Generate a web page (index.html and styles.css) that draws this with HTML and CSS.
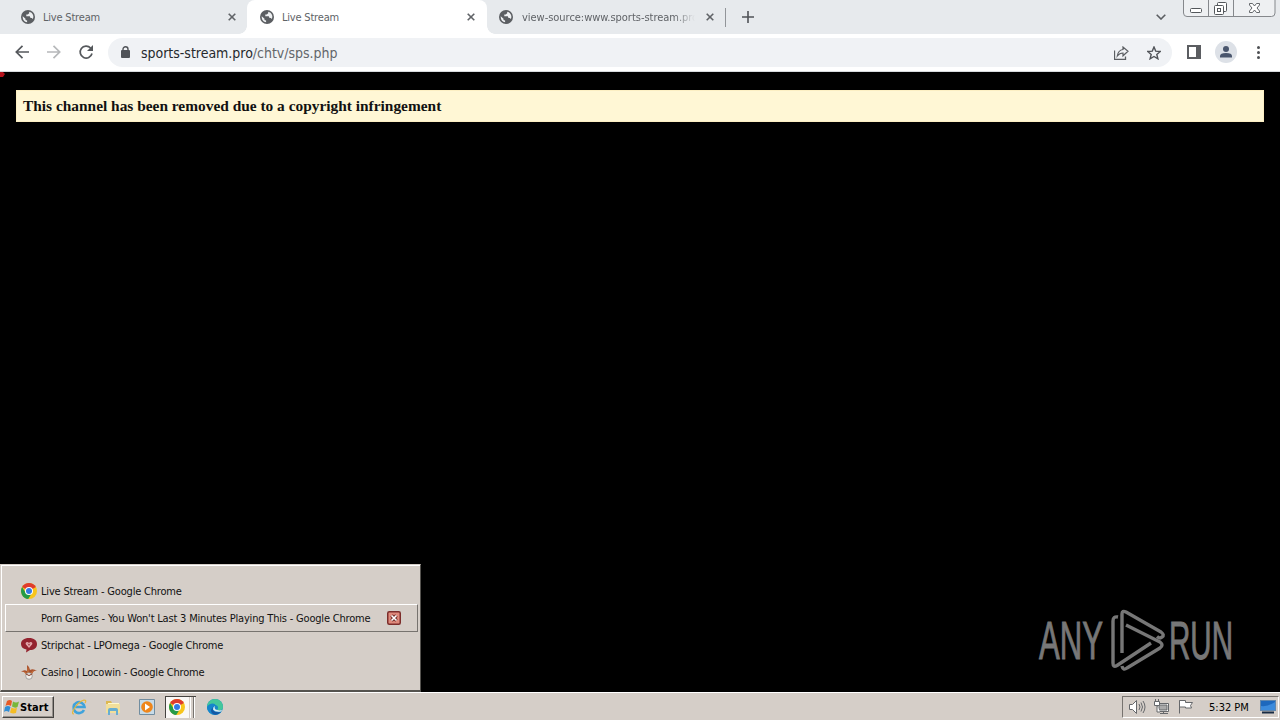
FILE: index.html
```html
<!DOCTYPE html>
<html lang="en">
<head>
<meta charset="utf-8">
<title>Live Stream</title>
<link rel="stylesheet" href="styles.css">
</head>
<body>
<svg class="defs" aria-hidden="true">
  <symbol id="globe" viewBox="0 0 14 14"><circle cx="7" cy="7" r="7" fill="#5b5e62"/><path d="M1.700 6.200 4.500 8.700v1.200l1.600.5v1.800C3.600 12 1.500 9.800 1.700 6.200zM8.200 1.700v1.500L6.700 4.500H5.300v1.700h3.500l.7 1.700h1.300l1 1.200c1.500-3 .1-6.500-3.600-7.400z" fill="#eef0f2"/></symbol>
  <symbol id="cross" viewBox="0 0 8 8"><path d="M.7.7l6.600 6.600M7.300.7.7 7.300" stroke="#606367" stroke-width="1.600"/></symbol>
  <symbol id="chrome" viewBox="0 0 16 16"><circle cx="8" cy="8" r="8" fill="#f8c51c"/><path d="M8 8 1.100 4A8 8 0 0 1 14.900 4z" fill="#df3b2e"/><path d="M1.100 4A8 8 0 0 0 7.200 16l3.900-6.200L8 8 4.700 9.700z" fill="#259b48"/><circle cx="8" cy="8" r="4" fill="#fff"/><circle cx="8" cy="8" r="3" fill="#3479e4"/></symbol>
</svg>
<div class="screen">
  <header class="tabs">
    <div class="tab first"><svg class="fav"><use href="#globe"/></svg><span class="title">Live Stream</span><svg class="x"><use href="#cross"/></svg></div>
    <div class="tab active"><svg class="fav"><use href="#globe"/></svg><span class="title">Live Stream</span><svg class="x"><use href="#cross"/></svg></div>
    <div class="tab last"><svg class="fav"><use href="#globe"/></svg><span class="title fade">view-source:www.sports-stream.pro</span><svg class="x"><use href="#cross"/></svg></div>
    <svg class="plus" viewBox="0 0 12 12"><path d="M6 0v12M0 6h12" stroke="#505357" stroke-width="1.600"/></svg>
    <svg class="chev" viewBox="0 0 10 6"><path d="M.7.7 5 5 9.300.7" fill="none" stroke="#5b5e62" stroke-width="1.600"/></svg>
    <svg class="winbtns" viewBox="0 0 93 18"><path d="M.5 0v13q0 3.500 3.500 3.500h84.500q3.500 0 3.500-3.500V0M25.500 0v16M50.500 0v16" fill="#eef0f2" stroke="#85888c"/><g fill="#fff" stroke="#53575b"><rect x="7.500" y="8.500" width="11" height="4" rx="1"/><rect x="34.500" y="2.500" width="9" height="9" rx="1"/><rect x="31.500" y="5.500" width="9" height="9" rx="1"/><rect x="34.500" y="8.500" width="3" height="3"/><path d="M66.500 3.500h3l2 2.500 2-2.500h3v1.500L74 8l2.500 3v1.500h-3l-2-2.500-2 2.500h-3V11L69 8l-2.500-3z" stroke-width=".9"/></g></svg>
  </header>
  <nav class="toolbar">
    <svg class="navicons" viewBox="0 0 80 16" fill="none" stroke="#55585c" stroke-width="1.700"><path d="M15 8H2.500M8.500 1.800 2.300 8l6.200 6.200"/><path d="M33 8h12.500M39.500 1.800 45.700 8l-6.200 6.200" stroke="#b6b8ba"/><path d="M76.600 4A6 6 0 1 0 78 9.500"/><path d="M79 1v6h-6z" fill="#55585c" stroke="none"/></svg>
    <div class="omni">
      <svg class="lock" viewBox="0 0 9 12"><rect y="4" width="9" height="8" rx="1" fill="#505358"/><path d="M2 5V3.200a2.500 2.500 0 0 1 5 0V5" fill="none" stroke="#505358" stroke-width="1.400"/></svg>
      <span class="url">sports-stream.pro<i>/chtv/sps.php</i></span>
      <svg class="share" viewBox="0 0 15 14" fill="none" stroke="#5b5e62"><path d="M.5 4.500v9h11v-3" stroke-width="1.300"/><path d="M9 1v2.500C5.500 4 3.800 6.500 3.300 10 5 7.800 6.500 7 9 7v2.800l5-4.500z" stroke-width="1.200"/></svg>
      <svg class="star" viewBox="0 0 14 14"><path d="m7 1 1.700 4.100 4.600.4-3.500 2.900 1.100 4.400L7 10.500l-3.900 2.300 1.100-4.400L.7 5.500l4.600-.4z" fill="none" stroke="#505358" stroke-width="1.400"/></svg>
    </div>
    <svg class="panel" viewBox="0 0 14 14"><path d="M0 0h14v14H0zM2 2v10h7V2z" fill="#5b5d61" fill-rule="evenodd"/></svg>
    <svg class="avatar" viewBox="0 0 22 22"><circle cx="11" cy="11" r="11" fill="#dde1e7"/><circle cx="11" cy="8" r="3" fill="#4a566d"/><path d="M5 16.500V15q0-3 6-3t6 3v1.500z" fill="#4a566d"/></svg>
    <svg class="dots" viewBox="0 0 3 13" fill="#4d4f53"><circle cx="1.500" cy="1.500" r="1.500"/><circle cx="1.500" cy="6.500" r="1.500"/><circle cx="1.500" cy="11.500" r="1.500"/></svg>
  </nav>
  <main class="page">
    <svg class="speck" viewBox="0 0 6 6"><path d="M0 0h3l2 2-2 3H0z" fill="#b5121c"/></svg>
    <div class="notice">This channel has been removed due to a copyright infringement</div>
    <svg class="brand" viewBox="0 0 220 76">
      <g class="brandtext"><text x="3" y="50" textLength="64" lengthAdjust="spacingAndGlyphs">ANY</text><text x="133" y="50" textLength="64" lengthAdjust="spacingAndGlyphs">RUN</text></g>
      <g fill="none" stroke="#777" stroke-width="3.400" stroke-linejoin="round"><path d="M86 44V5q0-4 4-2l35 20q4 3 1 5-2 2-5-.5"/><path d="M82 8q-5-1-5 4v42q0 5 4 2.500L115 34"/><path d="M90 16 124 33q4 3 0 6L91 59q-4 3-5-2"/></g>
    </svg>
    <div class="popup">
      <div class="row"><svg class="ico"><use href="#chrome"/></svg><span class="label">Live Stream - Google Chrome</span></div>
      <div class="row raised"><span class="ico"></span><span>Porn Games - You Won't Last 3 Minutes Playing This - Google Chrome</span><svg class="close" viewBox="0 0 14 14"><rect x=".75" y=".75" width="12.500" height="12.500" rx="1.500" fill="#e08a7c" stroke="#7c2d2b" stroke-width="1.500"/><path d="m4.500 4.500 5 5m0-5-5 5" stroke="#742d28" stroke-width="3.600"/><path d="m4.500 4.500 5 5m0-5-5 5" stroke="#fff" stroke-width="1.600"/></svg></div>
      <div class="row"><svg class="ico" viewBox="0 0 16 16"><path d="M8 1c5 0 8 2.500 8 6 0 4-3 6-7 6l-4 2.500.5-3C2 12 0 10 0 7c0-3.500 3-6 8-6z" fill="#94232f"/><path d="M8 11 4.800 7.200C4 5 6.500 4 8 6c1.500-2 4-1 3.200 1.200z" fill="#e3a9ad"/><path d="m6.500 6 1.500 1.500L9.500 6 8 9z" fill="#94232f"/></svg><span class="label">Stripchat - LPOmega - Google Chrome</span></div>
      <div class="row"><svg class="ico" viewBox="0 0 16 16"><path d="M5 11Q4 7 0 8q3-3 6-1L6 1q3 2 3 5 3-2 7 1-4-1-5 4z" fill="#a9532f"/><path d="M7 2l1 8 5-4-3 5H6L2 7l4 2z" fill="#c9753f"/><circle cx="8" cy="12" r="3.300" fill="#f1eeea" stroke="#888" stroke-width=".7"/><path d="m5 10 3 1.500 3-1.500" fill="none" stroke="#813c28"/></svg><span class="label">Casino | Locowin - Google Chrome</span></div>
    </div>
  </main>
  <footer class="taskbar">
    <div class="start"><svg viewBox="0 0 16 16"><path d="M3 2q3-2 5 0L7 7Q4 5 1.500 7z" fill="#e85a25"/><path d="M9 2.500q3 2 6 0L13.500 8Q11 9.500 8 7.500z" fill="#78b739"/><path d="M1 8q3-2 5.500 0L5 13q-3-2-5 0z" fill="#328ed5"/><path d="M7.500 8.500q3 2 5.500 0L12 14q-3 1-6-.5z" fill="#f5bd25"/></svg><b>Start</b></div>
    <svg class="ie" viewBox="0 0 16 16"><path d="M13 11A5.500 5.500 0 1 1 13.500 8H4" fill="none" stroke="#3fa3dc" stroke-width="2.600"/><path d="M3 15Q0 15 3 10 7 3 13 1q3 0 1 3" fill="none" stroke="#e6b73a" stroke-width="1.200"/></svg>
    <svg class="folder" viewBox="0 0 16 16"><path d="M1 2h5l1 2h7v10H1z" fill="#ddb851"/><path d="M3 4h11v8H3z" fill="#fff8cb"/><path d="M1 5h14v9H1z" fill="#f2df9a"/><path d="M3 16v-5q0-2 2-2h6q2 0 2 2v5h-2v-4H5v4z" fill="#68aed1"/></svg>
    <svg class="media" viewBox="0 0 16 16"><path d="M.5.500h15v15H.5z" fill="#c7dbe8" stroke="#718da0"/><circle cx="8" cy="8" r="5.800" fill="#ef861b"/><path d="m6 4.500 5 3.500-5 3.500z" fill="#fff"/></svg>
    <div class="stack"><svg><use href="#chrome"/></svg></div>
    <svg class="edge" viewBox="0 0 16 16"><circle cx="8" cy="8" r="8" fill="#168ac7"/><path d="M0 8A8 8 0 0 1 16 8c0 3-3 4-6 3 2-2 1-5-2-5Q4 3 0 8z" fill="#44c79b"/><path d="M0 8c2-4 8-5 9-1-4-1-4 5 5 6-6 6-14 1-14-5z" fill="#1686cc"/><path d="M6 8q-2 6 8 5-4 4-8 2-4-3 0-7z" fill="#1458a5"/><path d="M8 7q-2 4 5 4.500 3-.5 3-2l-2 3q-6 1-8-2 0-3 2-3.500z" fill="#e0eef2"/></svg>
    <div class="tray">
      <svg class="trayicons" viewBox="0 0 66 16" fill="#fff" stroke="#66686b"><path d="M.5 5.500h3l4-4v13l-4-4h-3z"/><path d="M10 5q2 3 0 6M12 3.500q3 4.500 0 9M14 2q4 6 0 12" fill="none"/><path d="M28.500 4.500h11v8h-11zM31 14.500h8M34.500 12.500v2"/><path d="M30 6h8v5h-8z" fill="#aaa"/><path d="M25.500 2.500h5v4h-5zM26.500 0v2.500M29.500 0v2.500M28 6.500v6.500h3"/><path d="M50.500 1.500v13M50.500 1.500h6v2h7l-2 3 1 2.500h-6V8h-6z"/></svg>
      <span class="time">5:32 PM</span>
      <svg class="desk" viewBox="0 0 16 14"><rect x=".5" y=".5" width="15" height="10" fill="#1d68bd" stroke="#6288ae"/><path d="M1 6Q8 7 15 2v8H1z" fill="#3c8bdc"/><path d="M2 12.500h12" stroke="#172b43" stroke-width="2"/></svg>
    </div>
  </footer>
</div>
</body>
</html>
```
FILE: styles.css
```css
* { box-sizing: border-box; }
body { margin: 0; font-family: "DejaVu Sans Condensed", "DejaVu Sans", sans-serif; font-size: 11px; }
svg { display: block; flex: none; }
.defs { display: none; }
.screen { width: 1280px; height: 720px; display: flex; flex-direction: column; overflow: hidden; background: #000; }
.tabs { height: 34px; flex: none; display: flex; background: #e7eaed; position: relative; }
.tab { height: 34px; display: flex; align-items: center; color: #606367; flex: none; }
.first { width: 247px; padding: 0 10px 0 21px; }
.active { width: 240px; padding: 0 11px 0 13px; background: #fff; border-radius: 8px 8px 0 0; position: relative; }
.active::before, .active::after { content: ""; position: absolute; bottom: 0; width: 8px; height: 8px; }
.active::before { left: -8px; background: radial-gradient(circle at 0 0, transparent 7.5px, #fff 8px); }
.active::after { right: -8px; background: radial-gradient(circle at 100% 0, transparent 7.5px, #fff 8px); }
.last { width: 239px; padding: 0 11px 0 12px; position: relative; }
.last::after { content: ""; position: absolute; right: 0; top: 8px; height: 19px; width: 1px; background: #929599; }
.fav { width: 14px; height: 14px; margin-right: 8px; }
.title { flex: 1; white-space: nowrap; overflow: hidden; margin-right: 11px; padding-top: 1px; line-height: 18px; letter-spacing: -.2px; }
.fade { letter-spacing: -.03px; padding-left: 1px; -webkit-mask-image: linear-gradient(90deg, #000 88%, transparent); mask-image: linear-gradient(90deg, #000 88%, transparent); }
.x { width: 8px; height: 8px; margin-right: 1px; }
.last .x { margin-right: 1px; }
.plus { width: 12px; height: 12px; margin: 11px 0 0 16px; }
.chev { width: 10px; height: 6px; margin: 14px 17px 0 auto; }
.winbtns { width: 93px; height: 18px; margin-right: 4px; }
.toolbar { height: 38px; flex: none; background: #fff; border-bottom: 1px solid #d7dade; display: flex; align-items: center; padding: 0 20px 0 14px; }
.navicons { width: 80px; height: 16px; margin-right: 14px; margin-top: -1px; }
.omni { width: 1064px; height: 29px; border-radius: 15px; background: #f0f2f5; display: flex; align-items: center; padding: 0 11px 0 13px; }
.lock { width: 9px; height: 12px; margin-right: 11px; margin-top: -2px; }
.url { flex: 1; font-size: 14px; line-height: 20px; color: #26292d; letter-spacing: -.02px; }
.url i { font-style: normal; color: #63666a; }
.share { width: 15px; height: 14px; margin-right: 18px; }
.star { width: 14px; height: 14px; }
.panel { width: 14px; height: 14px; margin-left: 15px; margin-top: -1px; }
.avatar { width: 22px; height: 22px; margin-left: 14px; margin-top: -1px; }
.dots { width: 3px; height: 13px; margin-left: 20px; margin-top: -1px; }
.page { height: 620px; flex: none; position: relative; padding: 18px 16px; }
.speck { width: 6px; height: 6px; position: absolute; left: 0; top: 0; }
.notice { height: 32px; background: #fff7d5; border: 1px solid #fcefc3; padding: 0 6px; font: bold 15.4px/30px "Liberation Serif", serif; color: #111; }
.brand { width: 220px; height: 76px; position: absolute; left: 1036px; top: 537px; overflow: visible; }
.brandtext { font: 53px "Liberation Sans", sans-serif; fill: #777; stroke: #777; stroke-width: 1px; }
.popup { width: 421px; height: 128px; position: absolute; left: 0; bottom: 0; padding: 12px 2px 0 4px; background: #d5cec8; border: 1px solid #d5cec8; border-right: 1px solid #55534f; border-bottom: 2px solid #55534f; box-shadow: inset 1px 1px #fff; }
.row { height: 27px; display: flex; align-items: center; padding-left: 16px; white-space: nowrap; color: #111; letter-spacing: -.19px; }
.label { padding-top: 2px; }
.raised { height: 28px; margin-bottom: -1px; border: 1px solid; border-color: #fff #77736f #77736f #fff; padding-left: 15px; }
.ico { width: 16px; height: 16px; margin-right: 4px; flex: none; }
.close { width: 14px; height: 14px; margin-left: auto; margin-right: 16px; }
.taskbar { height: 28px; flex: none; background: #d5cec8; border-top: 1px solid #fff; display: flex; align-items: flex-start; padding: 3px 1px 0 2px; }
.start { width: 52px; height: 22px; display: flex; align-items: center; border: 1px solid; border-color: #fff #454340 #454340 #fff; box-shadow: inset -1px -1px #96918c; padding-left: 1px; }
.start svg { width: 16px; height: 16px; }
.start b { letter-spacing: .1px; }
.ie, .folder, .media, .edge { width: 16px; height: 16px; margin-top: 3px; }
.ie { margin-left: 17px; }
.folder { margin-left: 18px; }
.media { margin-left: 18px; }
.stack { width: 31px; height: 22px; margin-left: 10px; margin-right: 11px; padding: 2px 3px; background: linear-gradient(90deg, #faf8f6 23px, #d5cec8 23px 24px, #fff 24px 25px, #d5cec8 25px 27px, #77736f 27px 28px, #fff 28px 29px, #d5cec8 29px); border-left: 1px solid #454340; border-top: 1px solid #454340; }
.stack svg { width: 16px; height: 16px; }
.tray { width: 157px; height: 22px; margin-left: auto; border: 1px solid; border-color: #77736f #fff #fff #77736f; display: flex; align-items: center; padding: 0 2px 0 6px; }
.trayicons { width: 66px; height: 16px; }
.time { margin-left: 14px; white-space: nowrap; }
.desk { width: 16px; height: 14px; margin-left: auto; }
```
